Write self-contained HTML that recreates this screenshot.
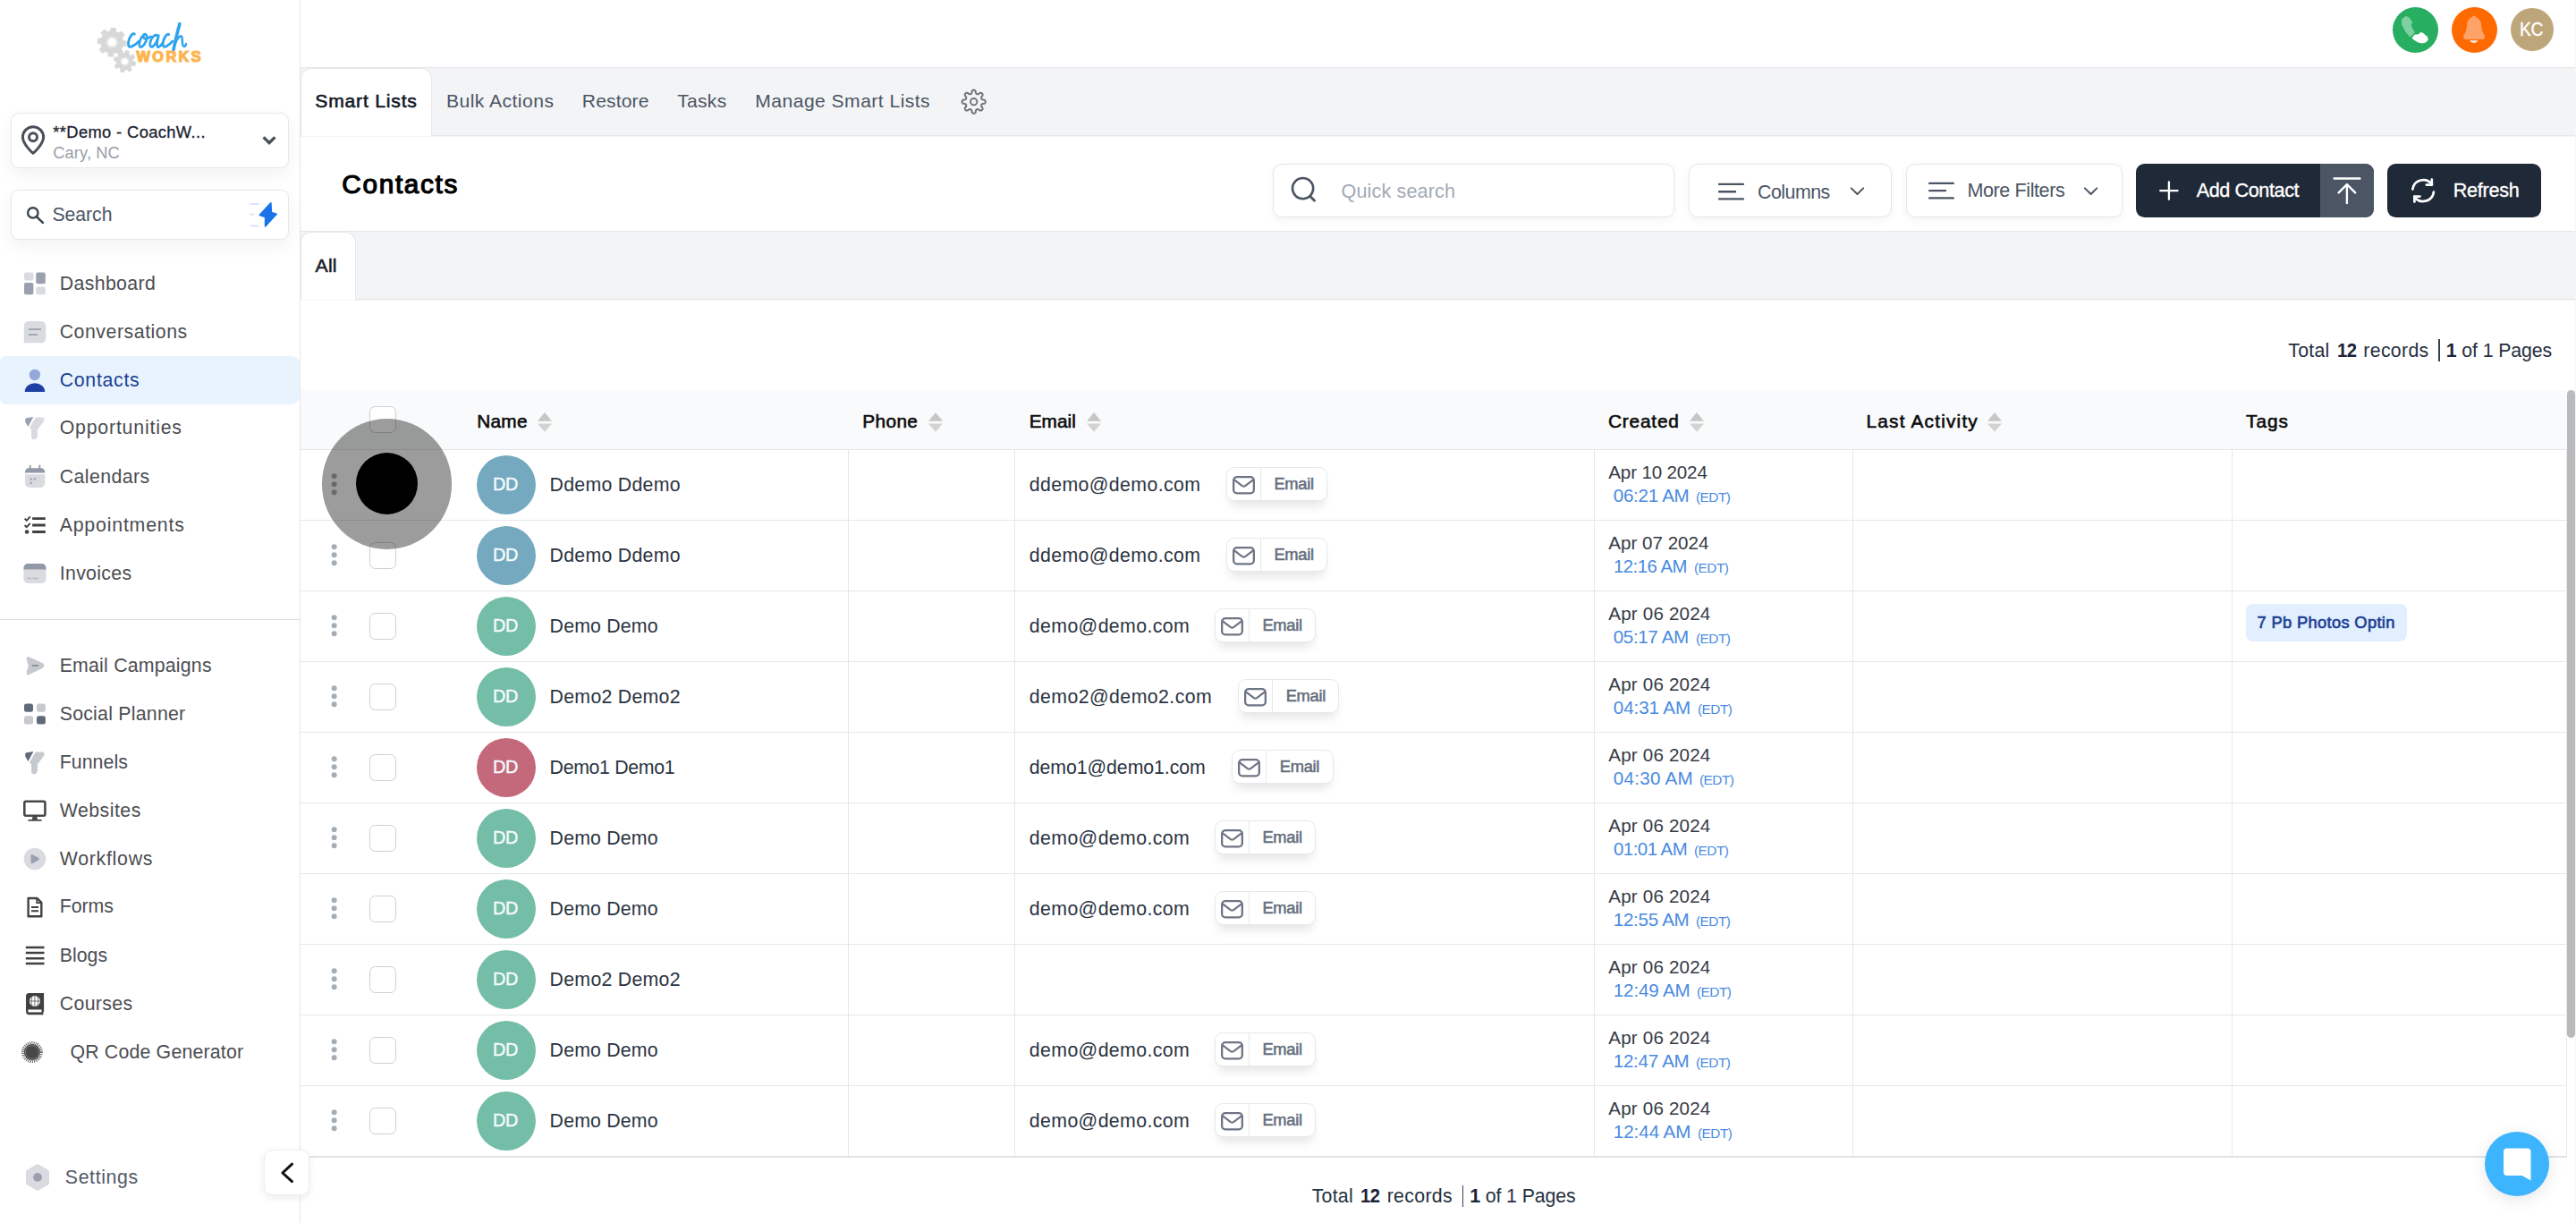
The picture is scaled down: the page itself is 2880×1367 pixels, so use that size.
<!DOCTYPE html>
<html><head><meta charset="utf-8"><title>Contacts</title>
<style>
html,body{margin:0;padding:0;}
body{width:2880px;height:1367px;overflow:hidden;background:#fff;position:relative;font-family:"Liberation Sans",sans-serif;}
.b{position:absolute;box-sizing:border-box;display:block;}
.t{position:absolute;white-space:nowrap;font-family:"Liberation Sans",sans-serif;}
</style></head><body>
<div class="b " style="left:335px;top:0px;width:1px;height:1367px;background:#e5e6ea;"></div>
<div class="b " style="left:336px;top:75px;width:2544px;height:1px;background:#e5e7eb;"></div>
<div class="b " style="left:336px;top:76px;width:2544px;height:75px;background:#f3f4f6;"></div>
<div class="b " style="left:336px;top:151px;width:2544px;height:1px;background:#e5e7eb;"></div>
<div class="b " style="left:336px;top:152px;width:2544px;height:1px;background:#f3f4f6;"></div>
<div class="b " style="left:336px;top:76px;width:147px;height:76px;background:#fff;border-radius:12.5px 12.5px 0 0;border:1px solid #e4e6ea;border-bottom:none;"></div>
<div class="b " style="left:336px;top:258px;width:2544px;height:1px;background:#e5e7eb;"></div>
<div class="b " style="left:336px;top:259px;width:2544px;height:75px;background:#f3f4f6;"></div>
<div class="b " style="left:336px;top:334px;width:2544px;height:1px;background:#e5e7eb;"></div>
<div class="b " style="left:336px;top:335px;width:2544px;height:1px;background:#f3f4f6;"></div>
<div class="b " style="left:336px;top:259px;width:62px;height:76px;background:#fff;border-radius:12px 12px 0 0;border:1px solid #e4e6ea;border-bottom:none;"></div>
<div class="b " style="left:336px;top:436px;width:2533px;height:66px;background:#f9fafb;"></div>
<div class="b " style="left:336px;top:502px;width:2534px;height:1px;background:#e5e7eb;"></div>
<div class="b " style="left:2869px;top:503px;width:1px;height:791px;background:#e7e8ea;"></div>
<div class="b " style="left:2879px;top:0px;width:1px;height:1367px;background:#f6f6f6;"></div>
<div class="b " style="left:2675px;top:8px;width:51px;height:51px;background:#27ae60;border-radius:50%;"></div>
<svg class="b" style="left:2675px;top:8px;overflow:visible;" width="51" height="51" viewBox="2675 8 51 51"><path d="M2689.9 18.6 L2693.4 20.4 L2696.4 25.2 L2694.8 28.2 L2696.9 32.8 L2699 36.2 L2694.5 40.5 L2689.2 34.1 L2685.7 26.7 L2686.1 21.4Z" fill="#7fd0a1" stroke="#7fd0a1" stroke-width="1.4" stroke-linejoin="round"/><path d="M2697.2 42.4 L2700 39.2 L2703.3 39.2 L2707.1 36.5 L2710.2 38.6 L2713.5 41.4 L2714.2 44.4 L2712.1 46.6 L2708.3 47.9 L2703 46.6 L2699.2 44.2Z" fill="#fff" stroke="#fff" stroke-width="1.2" stroke-linejoin="round"/></svg>
<div class="b " style="left:2741.4px;top:8px;width:51px;height:51px;background:#ff6a00;border-radius:50%;"></div>
<svg class="b" style="left:2741px;top:8px;overflow:visible;" width="51" height="51" viewBox="2741 8 51 51"><circle cx="2765.9" cy="19.4" r="2" fill="#ffa269"/><path d="M2765.9 18.9 C2761 19.2 2758.6 22.6 2758.2 27.4 C2757.8 32.6 2756.8 35.6 2755 38.4 C2753.6 40.8 2754.2 43.9 2756.6 43.9 H2775.6 C2778 43.9 2778.6 40.8 2777.2 38.4 C2775.4 35.6 2774.4 32.6 2774 27.4 C2773.6 22.6 2770.8 19.2 2765.9 18.9Z" fill="#ffa269"/><path d="M2761.4 45.2 H2770.2 C2769.4 48.8 2762.2 48.8 2761.4 45.2Z" fill="#fff0e4"/></svg>
<div class="b " style="left:2807px;top:9px;width:48px;height:48px;background:#bda77a;border-radius:50%;"></div>
<div class="t" style="left:2816.90px;top:18px;font-size:22.3px;line-height:29px;color:#fff;letter-spacing:-0.500px;transform:scaleX(0.8657);transform-origin:0 0;-webkit-text-stroke:0.4px #fff;">KC</div>
<div class="t" style="left:352.30px;top:99px;font-size:21.1px;line-height:28px;color:#111827;letter-spacing:0.810px;-webkit-text-stroke:0.6px #111827;">Smart Lists</div>
<div class="t" style="left:498.90px;top:99px;font-size:21.1px;line-height:28px;color:#4b5563;letter-spacing:0.469px;">Bulk Actions</div>
<div class="t" style="left:650.80px;top:99px;font-size:21.1px;line-height:28px;color:#4b5563;letter-spacing:0.133px;">Restore</div>
<div class="t" style="left:757.30px;top:99px;font-size:21.1px;line-height:28px;color:#4b5563;letter-spacing:0.247px;">Tasks</div>
<div class="t" style="left:844.30px;top:99px;font-size:21.1px;line-height:28px;color:#4b5563;letter-spacing:0.457px;">Manage Smart Lists</div>
<svg class="b" style="left:1074px;top:99px;overflow:visible;" width="30" height="30" viewBox="1074 99 30 30"><path d="M1088.70 100.60 L1089.04 100.63 L1089.38 100.71 L1089.71 100.85 L1090.03 101.06 L1090.33 101.32 L1090.60 101.68 L1090.83 102.18 L1090.90 103.34 L1091.06 103.85 L1091.24 104.22 L1091.42 104.51 L1091.61 104.75 L1091.80 104.94 L1092.01 105.09 L1092.22 105.20 L1092.45 105.27 L1092.70 105.31 L1092.97 105.31 L1093.27 105.28 L1093.61 105.20 L1093.99 105.06 L1094.47 104.82 L1095.33 104.05 L1095.85 103.85 L1096.30 103.80 L1096.70 103.82 L1097.07 103.90 L1097.40 104.04 L1097.70 104.21 L1097.96 104.44 L1098.19 104.70 L1098.36 105.00 L1098.50 105.33 L1098.58 105.70 L1098.60 106.10 L1098.55 106.55 L1098.35 107.07 L1097.58 107.93 L1097.34 108.41 L1097.20 108.79 L1097.12 109.13 L1097.09 109.43 L1097.09 109.70 L1097.13 109.95 L1097.20 110.18 L1097.31 110.39 L1097.46 110.60 L1097.65 110.79 L1097.89 110.98 L1098.18 111.16 L1098.55 111.34 L1099.06 111.50 L1100.22 111.57 L1100.72 111.80 L1101.08 112.07 L1101.34 112.37 L1101.55 112.69 L1101.69 113.02 L1101.77 113.36 L1101.80 113.70 L1101.77 114.04 L1101.69 114.38 L1101.55 114.71 L1101.34 115.03 L1101.08 115.33 L1100.72 115.60 L1100.22 115.83 L1099.06 115.90 L1098.55 116.06 L1098.18 116.24 L1097.89 116.42 L1097.65 116.61 L1097.46 116.80 L1097.31 117.01 L1097.20 117.22 L1097.13 117.45 L1097.09 117.70 L1097.09 117.97 L1097.12 118.27 L1097.20 118.61 L1097.34 118.99 L1097.58 119.47 L1098.35 120.33 L1098.55 120.85 L1098.60 121.30 L1098.58 121.70 L1098.50 122.07 L1098.36 122.40 L1098.19 122.70 L1097.96 122.96 L1097.70 123.19 L1097.40 123.36 L1097.07 123.50 L1096.70 123.58 L1096.30 123.60 L1095.85 123.55 L1095.33 123.35 L1094.47 122.58 L1093.99 122.34 L1093.61 122.20 L1093.27 122.12 L1092.97 122.09 L1092.70 122.09 L1092.45 122.13 L1092.22 122.20 L1092.01 122.31 L1091.80 122.46 L1091.61 122.65 L1091.42 122.89 L1091.24 123.18 L1091.06 123.55 L1090.90 124.06 L1090.83 125.22 L1090.60 125.72 L1090.33 126.08 L1090.03 126.34 L1089.71 126.55 L1089.38 126.69 L1089.04 126.77 L1088.70 126.80 L1088.36 126.77 L1088.02 126.69 L1087.69 126.55 L1087.37 126.34 L1087.07 126.08 L1086.80 125.72 L1086.57 125.22 L1086.50 124.06 L1086.34 123.55 L1086.16 123.18 L1085.98 122.89 L1085.79 122.65 L1085.60 122.46 L1085.39 122.31 L1085.18 122.20 L1084.95 122.13 L1084.70 122.09 L1084.43 122.09 L1084.13 122.12 L1083.79 122.20 L1083.41 122.34 L1082.93 122.58 L1082.07 123.35 L1081.55 123.55 L1081.10 123.60 L1080.70 123.58 L1080.33 123.50 L1080.00 123.36 L1079.70 123.19 L1079.44 122.96 L1079.21 122.70 L1079.04 122.40 L1078.90 122.07 L1078.82 121.70 L1078.80 121.30 L1078.85 120.85 L1079.05 120.33 L1079.82 119.47 L1080.06 118.99 L1080.20 118.61 L1080.28 118.27 L1080.31 117.97 L1080.31 117.70 L1080.27 117.45 L1080.20 117.22 L1080.09 117.01 L1079.94 116.80 L1079.75 116.61 L1079.51 116.42 L1079.22 116.24 L1078.85 116.06 L1078.34 115.90 L1077.18 115.83 L1076.68 115.60 L1076.32 115.33 L1076.06 115.03 L1075.85 114.71 L1075.71 114.38 L1075.63 114.04 L1075.60 113.70 L1075.63 113.36 L1075.71 113.02 L1075.85 112.69 L1076.06 112.37 L1076.32 112.07 L1076.68 111.80 L1077.18 111.57 L1078.34 111.50 L1078.85 111.34 L1079.22 111.16 L1079.51 110.98 L1079.75 110.79 L1079.94 110.60 L1080.09 110.39 L1080.20 110.18 L1080.27 109.95 L1080.31 109.70 L1080.31 109.43 L1080.28 109.13 L1080.20 108.79 L1080.06 108.41 L1079.82 107.93 L1079.05 107.07 L1078.85 106.55 L1078.80 106.10 L1078.82 105.70 L1078.90 105.33 L1079.04 105.00 L1079.21 104.70 L1079.44 104.44 L1079.70 104.21 L1080.00 104.04 L1080.33 103.90 L1080.70 103.82 L1081.10 103.80 L1081.55 103.85 L1082.07 104.05 L1082.93 104.82 L1083.41 105.06 L1083.79 105.20 L1084.13 105.28 L1084.43 105.31 L1084.70 105.31 L1084.95 105.27 L1085.18 105.20 L1085.39 105.09 L1085.60 104.94 L1085.79 104.75 L1085.98 104.51 L1086.16 104.22 L1086.34 103.85 L1086.50 103.34 L1086.57 102.18 L1086.80 101.68 L1087.07 101.32 L1087.37 101.06 L1087.69 100.85 L1088.02 100.71 L1088.36 100.63Z" fill="none" stroke="#727477" stroke-width="2" stroke-linejoin="round"/><circle cx="1088.7" cy="113.7" r="3.7" fill="none" stroke="#727477" stroke-width="2"/></svg>
<div class="t" style="left:382.30px;top:188px;font-size:29.7px;line-height:36px;color:#000;letter-spacing:1.708px;-webkit-text-stroke:1.2px #000;">Contacts</div>
<div class="t" style="left:352.60px;top:283px;font-size:21.1px;line-height:28px;color:#1a202c;letter-spacing:0.213px;-webkit-text-stroke:0.6px #1a202c;">All</div>
<div class="b " style="left:1423.3px;top:183px;width:449.2px;height:59.6px;background:#fff;border:1px solid #e5e7eb;border-radius:10px;box-shadow:0 3px 10px rgba(0,0,0,0.05);"></div>
<svg class="b" style="left:1440px;top:196px;overflow:visible;" width="34" height="34" viewBox="1440 196 34 34"><circle cx="1456.6" cy="210.6" r="11.6" fill="none" stroke="#4b5563" stroke-width="2.6"/><path d="M1464.6 219.2 L1469.6 224.2" stroke="#4b5563" stroke-width="2.8" stroke-linecap="round"/></svg>
<div class="t" style="left:1499.50px;top:200px;font-size:21.6px;line-height:28px;color:#a0aab5;letter-spacing:0.133px;">Quick search</div>
<div class="b " style="left:1888.2px;top:183px;width:227.2px;height:59.6px;background:#fff;border:1px solid #e5e7eb;border-radius:10px;box-shadow:0 3px 10px rgba(0,0,0,0.05);"></div>
<svg class="b" style="left:1920px;top:200px;overflow:visible;" width="32" height="28" viewBox="1920 200 32 28"><path d="M1922.1 205.9 H1948.9 M1922.1 214.3 H1940 M1922.1 222.4 H1948.9" stroke="#4b5563" stroke-width="2.4" stroke-linecap="round"/></svg>
<div class="t" style="left:1964.50px;top:201px;font-size:21.6px;line-height:28px;color:#4b5563;letter-spacing:-0.500px;transform:scaleX(0.9889);transform-origin:0 0;">Columns</div>
<svg class="b" style="left:2066px;top:206px;overflow:visible;" width="22" height="16" viewBox="2066 206 22 16"><path d="M2069.8 210.4 L2076.5 217 L2083.2 210.4" fill="none" stroke="#4b5563" stroke-width="2" stroke-linecap="round" stroke-linejoin="round"/></svg>
<div class="b " style="left:2131.4px;top:183px;width:241.2px;height:59.6px;background:#fff;border:1px solid #e5e7eb;border-radius:10px;box-shadow:0 3px 10px rgba(0,0,0,0.05);"></div>
<svg class="b" style="left:2155px;top:199px;overflow:visible;" width="32" height="28" viewBox="2155 199 32 28"><path d="M2157.2 204.9 H2183.8 M2157.2 213.1 H2175 M2157.2 221.4 H2183.8" stroke="#4b5563" stroke-width="2.4" stroke-linecap="round"/></svg>
<div class="t" style="left:2199.40px;top:199px;font-size:21.6px;line-height:28px;color:#4b5563;letter-spacing:-0.418px;">More Filters</div>
<svg class="b" style="left:2327px;top:206px;overflow:visible;" width="22" height="16" viewBox="2327 206 22 16"><path d="M2330.9 210.4 L2337.6 217 L2344.3 210.4" fill="none" stroke="#4b5563" stroke-width="2" stroke-linecap="round" stroke-linejoin="round"/></svg>
<div class="b " style="left:2388px;top:183.2px;width:266px;height:59.6px;background:#1f2937;border-radius:9.5px;"></div>
<div class="b " style="left:2594.2px;top:183.2px;width:59.8px;height:59.6px;background:#4b5563;border-radius:0 9.5px 9.5px 0;"></div>
<svg class="b" style="left:2412px;top:200px;overflow:visible;" width="26" height="26" viewBox="2412 200 26 26"><path d="M2424.9 203.4 V222.8 M2415.2 213.1 H2434.6" stroke="#fff" stroke-width="2.3" stroke-linecap="round"/></svg>
<div class="t" style="left:2455.68px;top:199px;font-size:21.6px;line-height:28px;color:#fff;letter-spacing:-0.390px;-webkit-text-stroke:0.35px #fff;">Add Contact</div>
<svg class="b" style="left:2606px;top:196px;overflow:visible;" width="36" height="34" viewBox="2606 196 36 34"><path d="M2609.6 199.5 H2638.4 M2623.9 227 V206.5 M2614.6 215.4 L2623.9 206.1 L2633.2 215.4" fill="none" stroke="#fff" stroke-width="2.4" stroke-linecap="round" stroke-linejoin="round"/></svg>
<div class="b " style="left:2668.9px;top:183.2px;width:172.2px;height:59.6px;background:#1f2937;border-radius:9.5px;"></div>
<svg class="b" style="left:2694px;top:198px;overflow:visible;" width="30" height="30" viewBox="2694 198 30 30"><g transform="translate(5418.2,0) scale(-1,1)"><path d="M2720.9 211.5 A12 12 0 0 0 2699.2 206.3 M2697.3 214.7 A12 12 0 0 0 2719 219.9" fill="none" stroke="#fff" stroke-width="2.7" stroke-linecap="round"/><path d="M2699.4 200.6 V206.6 H2705.4 M2718.8 225.6 V219.6 H2712.8" fill="none" stroke="#fff" stroke-width="2.7" stroke-linecap="round" stroke-linejoin="round"/></g></svg>
<div class="t" style="left:2742.68px;top:199px;font-size:21.6px;line-height:28px;color:#fff;letter-spacing:-0.267px;-webkit-text-stroke:0.35px #fff;">Refresh</div>
<div class="t" style="left:2558.30px;top:378px;font-size:21.3px;line-height:28px;color:#263040;letter-spacing:0.251px;">Total</div>
<div class="t" style="left:2612.50px;top:378px;font-size:21.3px;line-height:28px;color:#1a2233;font-weight:700;letter-spacing:-0.500px;transform:scaleX(0.9484);transform-origin:0 0;">12</div>
<div class="t" style="left:2642.30px;top:378px;font-size:21.3px;line-height:28px;color:#263040;letter-spacing:0.327px;">records</div>
<div class="b " style="left:2726.1px;top:379.4px;width:1.6px;height:24.3px;background:#374151;"></div>
<div class="t" style="left:2734.80px;top:378px;font-size:21.3px;line-height:28px;color:#1a2233;font-weight:700;">1</div>
<div class="t" style="left:2752.30px;top:378px;font-size:21.3px;line-height:28px;color:#263040;letter-spacing:-0.096px;">of 1 Pages</div>
<div class="t" style="left:1466.70px;top:1323px;font-size:21.3px;line-height:28px;color:#263040;letter-spacing:0.251px;">Total</div>
<div class="t" style="left:1520.90px;top:1323px;font-size:21.3px;line-height:28px;color:#1a2233;font-weight:700;letter-spacing:-0.500px;transform:scaleX(0.9484);transform-origin:0 0;">12</div>
<div class="t" style="left:1550.70px;top:1323px;font-size:21.3px;line-height:28px;color:#263040;letter-spacing:0.327px;">records</div>
<div class="b " style="left:1634.5px;top:1325.2px;width:1.6px;height:24.3px;background:#374151;"></div>
<div class="t" style="left:1643.20px;top:1323px;font-size:21.3px;line-height:28px;color:#1a2233;font-weight:700;">1</div>
<div class="t" style="left:1660.70px;top:1323px;font-size:21.3px;line-height:28px;color:#263040;letter-spacing:-0.096px;">of 1 Pages</div>
<div class="t" style="left:533.20px;top:457px;font-size:20.8px;line-height:27px;color:#0b0b0c;letter-spacing:0.272px;-webkit-text-stroke:0.6px #0b0b0c;">Name</div>
<svg class="b" style="left:601.0999999999999px;top:460px;overflow:visible;" width="16.0" height="24" viewBox="601.0999999999999 460 16.0 24"><path d="M609.0999999999999 461 L617.0999999999999 470.8 H601.0999999999999Z" fill="#c6c6c6"/><path d="M609.0999999999999 482.8 L617.0999999999999 473.6 H601.0999999999999Z" fill="#d3d3d3"/></svg>
<div class="t" style="left:964.30px;top:457px;font-size:20.8px;line-height:27px;color:#0b0b0c;letter-spacing:0.359px;-webkit-text-stroke:0.6px #0b0b0c;">Phone</div>
<svg class="b" style="left:1037.5px;top:460px;overflow:visible;" width="16.0" height="24" viewBox="1037.5 460 16.0 24"><path d="M1045.5 461 L1053.5 470.8 H1037.5Z" fill="#c6c6c6"/><path d="M1045.5 482.8 L1053.5 473.6 H1037.5Z" fill="#d3d3d3"/></svg>
<div class="t" style="left:1150.70px;top:457px;font-size:20.8px;line-height:27px;color:#0b0b0c;letter-spacing:0.050px;-webkit-text-stroke:0.6px #0b0b0c;">Email</div>
<svg class="b" style="left:1214.5px;top:460px;overflow:visible;" width="16.0" height="24" viewBox="1214.5 460 16.0 24"><path d="M1222.5 461 L1230.5 470.8 H1214.5Z" fill="#c6c6c6"/><path d="M1222.5 482.8 L1230.5 473.6 H1214.5Z" fill="#d3d3d3"/></svg>
<div class="t" style="left:1797.90px;top:457px;font-size:20.8px;line-height:27px;color:#0b0b0c;letter-spacing:0.834px;-webkit-text-stroke:0.6px #0b0b0c;">Created</div>
<svg class="b" style="left:1888.4999999999998px;top:460px;overflow:visible;" width="16.0" height="24" viewBox="1888.4999999999998 460 16.0 24"><path d="M1896.4999999999998 461 L1904.4999999999998 470.8 H1888.4999999999998Z" fill="#c6c6c6"/><path d="M1896.4999999999998 482.8 L1904.4999999999998 473.6 H1888.4999999999998Z" fill="#d3d3d3"/></svg>
<div class="t" style="left:2086.60px;top:457px;font-size:20.8px;line-height:27px;color:#0b0b0c;letter-spacing:1.198px;-webkit-text-stroke:0.6px #0b0b0c;">Last Activity</div>
<svg class="b" style="left:2222.4000000000005px;top:460px;overflow:visible;" width="16.0" height="24" viewBox="2222.4000000000005 460 16.0 24"><path d="M2230.4000000000005 461 L2238.4000000000005 470.8 H2222.4000000000005Z" fill="#c6c6c6"/><path d="M2230.4000000000005 482.8 L2238.4000000000005 473.6 H2222.4000000000005Z" fill="#d3d3d3"/></svg>
<div class="t" style="left:2511.10px;top:457px;font-size:20.8px;line-height:27px;color:#0b0b0c;letter-spacing:0.987px;-webkit-text-stroke:0.6px #0b0b0c;">Tags</div>
<div class="b " style="left:413px;top:454.3px;width:30px;height:29.6px;background:#fff;border:1.2px solid #cecfd3;border-radius:6.5px;"></div>
<div class="b " style="left:336px;top:581px;width:2534px;height:1px;background:#e5e7eb;"></div>
<svg class="b" style="left:369px;top:528px;overflow:visible;" width="10" height="27" viewBox="369 528 10 27"><circle cx="373.6" cy="532.35" r="3" fill="#a5adb5"/><circle cx="373.6" cy="541.35" r="3" fill="#a5adb5"/><circle cx="373.6" cy="550.35" r="3" fill="#a5adb5"/></svg>
<div class="b " style="left:413px;top:526.8px;width:30px;height:30px;background:#fff;border:1.2px solid #cecfd3;border-radius:6.5px;"></div>
<div class="b " style="left:533px;top:508.8px;width:66px;height:66px;background:#74a9bf;border-radius:50%;"></div>
<div class="t" style="left:551.23px;top:527px;font-size:20.8px;line-height:27px;color:#f4fafc;letter-spacing:-0.500px;transform:scaleX(0.9558);transform-origin:0 0;-webkit-text-stroke:0.45px #f4fafc;">DD</div>
<div class="t" style="left:614.60px;top:528px;font-size:21.3px;line-height:28px;color:#2b3442;letter-spacing:0.276px;">Ddemo Ddemo</div>
<div class="t" style="left:1150.80px;top:528px;font-size:21.3px;line-height:28px;color:#2b3442;letter-spacing:0.383px;">ddemo@demo.com</div>
<div class="b " style="left:1371px;top:522px;width:113.2px;height:38.2px;background:#fff;border:1.3px solid #e6e8eb;border-radius:9px;box-shadow:0 9px 12px -4px rgba(0,0,0,0.11);"></div>
<div class="b " style="left:1409px;top:523px;width:1px;height:36px;background:#e5e7eb;"></div>
<svg class="b" style="left:1378px;top:531.6px;overflow:visible;" width="25" height="21.0" viewBox="1378 531.6 25 21.0"><rect x="1379.15" y="532.75" width="22.7" height="18.2" rx="3.8" fill="none" stroke="#6d7584" stroke-width="2.3"/><path d="M1380 536.0 L1388.9 542.7 Q1390.5 543.8000000000001 1392.1 542.7 L1401 536.0" fill="none" stroke="#6d7584" stroke-width="2.2" stroke-linejoin="round" stroke-linecap="round"/></svg>
<div class="t" style="left:1424.38px;top:528px;font-size:18.3px;line-height:25px;color:#656e7d;letter-spacing:-0.275px;-webkit-text-stroke:0.55px #656e7d;">Email</div>
<div class="t" style="left:1798.30px;top:514px;font-size:20.6px;line-height:27px;color:#363b45;letter-spacing:-0.167px;">Apr 10 2024</div>
<div class="t" style="left:1803.80px;top:540px;font-size:20.6px;line-height:27px;color:#4a8be0;letter-spacing:-0.291px;">06:21 AM</div>
<div class="t" style="left:1896.10px;top:545px;font-size:15.4px;line-height:22px;color:#4a8be0;letter-spacing:-0.500px;transform:scaleX(0.9989);transform-origin:0 0;">(EDT)</div>
<div class="b " style="left:336px;top:660px;width:2534px;height:1px;background:#e5e7eb;"></div>
<svg class="b" style="left:369px;top:607px;overflow:visible;" width="10" height="27" viewBox="369 607 10 27"><circle cx="373.6" cy="611.35" r="3" fill="#a5adb5"/><circle cx="373.6" cy="620.35" r="3" fill="#a5adb5"/><circle cx="373.6" cy="629.35" r="3" fill="#a5adb5"/></svg>
<div class="b " style="left:413px;top:605.8px;width:30px;height:30px;background:#fff;border:1.2px solid #cecfd3;border-radius:6.5px;"></div>
<div class="b " style="left:533px;top:587.8px;width:66px;height:66px;background:#74a9bf;border-radius:50%;"></div>
<div class="t" style="left:551.23px;top:606px;font-size:20.8px;line-height:27px;color:#f4fafc;letter-spacing:-0.500px;transform:scaleX(0.9558);transform-origin:0 0;-webkit-text-stroke:0.45px #f4fafc;">DD</div>
<div class="t" style="left:614.60px;top:607px;font-size:21.3px;line-height:28px;color:#2b3442;letter-spacing:0.276px;">Ddemo Ddemo</div>
<div class="t" style="left:1150.80px;top:607px;font-size:21.3px;line-height:28px;color:#2b3442;letter-spacing:0.383px;">ddemo@demo.com</div>
<div class="b " style="left:1371px;top:601px;width:113.2px;height:38.2px;background:#fff;border:1.3px solid #e6e8eb;border-radius:9px;box-shadow:0 9px 12px -4px rgba(0,0,0,0.11);"></div>
<div class="b " style="left:1409px;top:602px;width:1px;height:36px;background:#e5e7eb;"></div>
<svg class="b" style="left:1378px;top:610.6px;overflow:visible;" width="25" height="21.0" viewBox="1378 610.6 25 21.0"><rect x="1379.15" y="611.75" width="22.7" height="18.2" rx="3.8" fill="none" stroke="#6d7584" stroke-width="2.3"/><path d="M1380 615.0 L1388.9 621.7 Q1390.5 622.8000000000001 1392.1 621.7 L1401 615.0" fill="none" stroke="#6d7584" stroke-width="2.2" stroke-linejoin="round" stroke-linecap="round"/></svg>
<div class="t" style="left:1424.38px;top:607px;font-size:18.3px;line-height:25px;color:#656e7d;letter-spacing:-0.275px;-webkit-text-stroke:0.55px #656e7d;">Email</div>
<div class="t" style="left:1798.30px;top:593px;font-size:20.6px;line-height:27px;color:#363b45;letter-spacing:-0.007px;">Apr 07 2024</div>
<div class="t" style="left:1803.80px;top:619px;font-size:20.6px;line-height:27px;color:#4a8be0;letter-spacing:-0.500px;transform:scaleX(0.9864);transform-origin:0 0;">12:16 AM</div>
<div class="t" style="left:1893.50px;top:624px;font-size:15.4px;line-height:22px;color:#4a8be0;letter-spacing:-0.500px;transform:scaleX(0.9989);transform-origin:0 0;">(EDT)</div>
<div class="b " style="left:336px;top:739px;width:2534px;height:1px;background:#e5e7eb;"></div>
<svg class="b" style="left:369px;top:686px;overflow:visible;" width="10" height="27" viewBox="369 686 10 27"><circle cx="373.6" cy="690.35" r="3" fill="#a5adb5"/><circle cx="373.6" cy="699.35" r="3" fill="#a5adb5"/><circle cx="373.6" cy="708.35" r="3" fill="#a5adb5"/></svg>
<div class="b " style="left:413px;top:684.8px;width:30px;height:30px;background:#fff;border:1.2px solid #cecfd3;border-radius:6.5px;"></div>
<div class="b " style="left:533px;top:666.8px;width:66px;height:66px;background:#74bda7;border-radius:50%;"></div>
<div class="t" style="left:551.23px;top:685px;font-size:20.8px;line-height:27px;color:#f4fafc;letter-spacing:-0.500px;transform:scaleX(0.9558);transform-origin:0 0;-webkit-text-stroke:0.45px #f4fafc;">DD</div>
<div class="t" style="left:614.60px;top:686px;font-size:21.3px;line-height:28px;color:#2b3442;letter-spacing:0.182px;">Demo Demo</div>
<div class="t" style="left:1150.80px;top:686px;font-size:21.3px;line-height:28px;color:#2b3442;letter-spacing:0.388px;">demo@demo.com</div>
<div class="b " style="left:1358px;top:680px;width:113.2px;height:38.2px;background:#fff;border:1.3px solid #e6e8eb;border-radius:9px;box-shadow:0 9px 12px -4px rgba(0,0,0,0.11);"></div>
<div class="b " style="left:1396px;top:681px;width:1px;height:36px;background:#e5e7eb;"></div>
<svg class="b" style="left:1365px;top:689.6px;overflow:visible;" width="25" height="21.0" viewBox="1365 689.6 25 21.0"><rect x="1366.15" y="690.75" width="22.7" height="18.2" rx="3.8" fill="none" stroke="#6d7584" stroke-width="2.3"/><path d="M1367 694.0 L1375.9 700.7 Q1377.5 701.8000000000001 1379.1 700.7 L1388 694.0" fill="none" stroke="#6d7584" stroke-width="2.2" stroke-linejoin="round" stroke-linecap="round"/></svg>
<div class="t" style="left:1411.38px;top:686px;font-size:18.3px;line-height:25px;color:#656e7d;letter-spacing:-0.275px;-webkit-text-stroke:0.55px #656e7d;">Email</div>
<div class="t" style="left:1798.30px;top:672px;font-size:20.6px;line-height:27px;color:#363b45;letter-spacing:0.173px;">Apr 06 2024</div>
<div class="t" style="left:1803.80px;top:698px;font-size:20.6px;line-height:27px;color:#4a8be0;letter-spacing:-0.376px;">05:17 AM</div>
<div class="t" style="left:1895.50px;top:703px;font-size:15.4px;line-height:22px;color:#4a8be0;letter-spacing:-0.500px;transform:scaleX(0.9989);transform-origin:0 0;">(EDT)</div>
<div class="b " style="left:336px;top:818px;width:2534px;height:1px;background:#e5e7eb;"></div>
<svg class="b" style="left:369px;top:765px;overflow:visible;" width="10" height="27" viewBox="369 765 10 27"><circle cx="373.6" cy="769.35" r="3" fill="#a5adb5"/><circle cx="373.6" cy="778.35" r="3" fill="#a5adb5"/><circle cx="373.6" cy="787.35" r="3" fill="#a5adb5"/></svg>
<div class="b " style="left:413px;top:763.8px;width:30px;height:30px;background:#fff;border:1.2px solid #cecfd3;border-radius:6.5px;"></div>
<div class="b " style="left:533px;top:745.8px;width:66px;height:66px;background:#74bda7;border-radius:50%;"></div>
<div class="t" style="left:551.23px;top:764px;font-size:20.8px;line-height:27px;color:#f4fafc;letter-spacing:-0.500px;transform:scaleX(0.9558);transform-origin:0 0;-webkit-text-stroke:0.45px #f4fafc;">DD</div>
<div class="t" style="left:614.60px;top:765px;font-size:21.3px;line-height:28px;color:#2b3442;letter-spacing:0.276px;">Demo2 Demo2</div>
<div class="t" style="left:1150.80px;top:765px;font-size:21.3px;line-height:28px;color:#2b3442;letter-spacing:0.426px;">demo2@demo2.com</div>
<div class="b " style="left:1384.3px;top:759px;width:113.2px;height:38.2px;background:#fff;border:1.3px solid #e6e8eb;border-radius:9px;box-shadow:0 9px 12px -4px rgba(0,0,0,0.11);"></div>
<div class="b " style="left:1422px;top:760px;width:1px;height:36px;background:#e5e7eb;"></div>
<svg class="b" style="left:1391.3px;top:768.6px;overflow:visible;" width="25.0" height="21.0" viewBox="1391.3 768.6 25.0 21.0"><rect x="1392.45" y="769.75" width="22.7" height="18.2" rx="3.8" fill="none" stroke="#6d7584" stroke-width="2.3"/><path d="M1393.3 773.0 L1402.2 779.7 Q1403.8 780.8000000000001 1405.3999999999999 779.7 L1414.3 773.0" fill="none" stroke="#6d7584" stroke-width="2.2" stroke-linejoin="round" stroke-linecap="round"/></svg>
<div class="t" style="left:1437.67px;top:765px;font-size:18.3px;line-height:25px;color:#656e7d;letter-spacing:-0.275px;-webkit-text-stroke:0.55px #656e7d;">Email</div>
<div class="t" style="left:1798.30px;top:751px;font-size:20.6px;line-height:27px;color:#363b45;letter-spacing:0.173px;">Apr 06 2024</div>
<div class="t" style="left:1803.80px;top:777px;font-size:20.6px;line-height:27px;color:#4a8be0;letter-spacing:-0.091px;">04:31 AM</div>
<div class="t" style="left:1897.50px;top:782px;font-size:15.4px;line-height:22px;color:#4a8be0;letter-spacing:-0.500px;transform:scaleX(0.9989);transform-origin:0 0;">(EDT)</div>
<div class="b " style="left:336px;top:897px;width:2534px;height:1px;background:#e5e7eb;"></div>
<svg class="b" style="left:369px;top:844px;overflow:visible;" width="10" height="27" viewBox="369 844 10 27"><circle cx="373.6" cy="848.35" r="3" fill="#a5adb5"/><circle cx="373.6" cy="857.35" r="3" fill="#a5adb5"/><circle cx="373.6" cy="866.35" r="3" fill="#a5adb5"/></svg>
<div class="b " style="left:413px;top:842.8px;width:30px;height:30px;background:#fff;border:1.2px solid #cecfd3;border-radius:6.5px;"></div>
<div class="b " style="left:533px;top:824.8px;width:66px;height:66px;background:#c4697c;border-radius:50%;"></div>
<div class="t" style="left:551.23px;top:843px;font-size:20.8px;line-height:27px;color:#f4fafc;letter-spacing:-0.500px;transform:scaleX(0.9558);transform-origin:0 0;-webkit-text-stroke:0.45px #f4fafc;">DD</div>
<div class="t" style="left:614.60px;top:844px;font-size:21.3px;line-height:28px;color:#2b3442;letter-spacing:-0.324px;">Demo1 Demo1</div>
<div class="t" style="left:1150.80px;top:844px;font-size:21.3px;line-height:28px;color:#2b3442;letter-spacing:-0.074px;">demo1@demo1.com</div>
<div class="b " style="left:1377.4px;top:838px;width:113.2px;height:38.2px;background:#fff;border:1.3px solid #e6e8eb;border-radius:9px;box-shadow:0 9px 12px -4px rgba(0,0,0,0.11);"></div>
<div class="b " style="left:1415px;top:839px;width:1px;height:36px;background:#e5e7eb;"></div>
<svg class="b" style="left:1384.4px;top:847.6px;overflow:visible;" width="25.0" height="21.0" viewBox="1384.4 847.6 25.0 21.0"><rect x="1385.5500000000002" y="848.75" width="22.7" height="18.2" rx="3.8" fill="none" stroke="#6d7584" stroke-width="2.3"/><path d="M1386.4 852.0 L1395.3000000000002 858.7 Q1396.9 859.8000000000001 1398.5 858.7 L1407.4 852.0" fill="none" stroke="#6d7584" stroke-width="2.2" stroke-linejoin="round" stroke-linecap="round"/></svg>
<div class="t" style="left:1430.78px;top:844px;font-size:18.3px;line-height:25px;color:#656e7d;letter-spacing:-0.275px;-webkit-text-stroke:0.55px #656e7d;">Email</div>
<div class="t" style="left:1798.30px;top:830px;font-size:20.6px;line-height:27px;color:#363b45;letter-spacing:0.173px;">Apr 06 2024</div>
<div class="t" style="left:1803.80px;top:856px;font-size:20.6px;line-height:27px;color:#4a8be0;letter-spacing:0.281px;">04:30 AM</div>
<div class="t" style="left:1900.10px;top:861px;font-size:15.4px;line-height:22px;color:#4a8be0;letter-spacing:-0.500px;transform:scaleX(0.9989);transform-origin:0 0;">(EDT)</div>
<div class="b " style="left:336px;top:976px;width:2534px;height:1px;background:#e5e7eb;"></div>
<svg class="b" style="left:369px;top:923px;overflow:visible;" width="10" height="27" viewBox="369 923 10 27"><circle cx="373.6" cy="927.35" r="3" fill="#a5adb5"/><circle cx="373.6" cy="936.35" r="3" fill="#a5adb5"/><circle cx="373.6" cy="945.35" r="3" fill="#a5adb5"/></svg>
<div class="b " style="left:413px;top:921.8px;width:30px;height:30px;background:#fff;border:1.2px solid #cecfd3;border-radius:6.5px;"></div>
<div class="b " style="left:533px;top:903.8px;width:66px;height:66px;background:#74bda7;border-radius:50%;"></div>
<div class="t" style="left:551.23px;top:922px;font-size:20.8px;line-height:27px;color:#f4fafc;letter-spacing:-0.500px;transform:scaleX(0.9558);transform-origin:0 0;-webkit-text-stroke:0.45px #f4fafc;">DD</div>
<div class="t" style="left:614.60px;top:923px;font-size:21.3px;line-height:28px;color:#2b3442;letter-spacing:0.182px;">Demo Demo</div>
<div class="t" style="left:1150.80px;top:923px;font-size:21.3px;line-height:28px;color:#2b3442;letter-spacing:0.388px;">demo@demo.com</div>
<div class="b " style="left:1358px;top:917px;width:113.2px;height:38.2px;background:#fff;border:1.3px solid #e6e8eb;border-radius:9px;box-shadow:0 9px 12px -4px rgba(0,0,0,0.11);"></div>
<div class="b " style="left:1396px;top:918px;width:1px;height:36px;background:#e5e7eb;"></div>
<svg class="b" style="left:1365px;top:926.6px;overflow:visible;" width="25" height="21.0" viewBox="1365 926.6 25 21.0"><rect x="1366.15" y="927.75" width="22.7" height="18.2" rx="3.8" fill="none" stroke="#6d7584" stroke-width="2.3"/><path d="M1367 931.0 L1375.9 937.7 Q1377.5 938.8000000000001 1379.1 937.7 L1388 931.0" fill="none" stroke="#6d7584" stroke-width="2.2" stroke-linejoin="round" stroke-linecap="round"/></svg>
<div class="t" style="left:1411.38px;top:923px;font-size:18.3px;line-height:25px;color:#656e7d;letter-spacing:-0.275px;-webkit-text-stroke:0.55px #656e7d;">Email</div>
<div class="t" style="left:1798.30px;top:909px;font-size:20.6px;line-height:27px;color:#363b45;letter-spacing:0.173px;">Apr 06 2024</div>
<div class="t" style="left:1803.80px;top:935px;font-size:20.6px;line-height:27px;color:#4a8be0;letter-spacing:-0.500px;transform:scaleX(0.9900);transform-origin:0 0;">01:01 AM</div>
<div class="t" style="left:1893.80px;top:940px;font-size:15.4px;line-height:22px;color:#4a8be0;letter-spacing:-0.500px;transform:scaleX(0.9989);transform-origin:0 0;">(EDT)</div>
<div class="b " style="left:336px;top:1055px;width:2534px;height:1px;background:#e5e7eb;"></div>
<svg class="b" style="left:369px;top:1002px;overflow:visible;" width="10" height="27" viewBox="369 1002 10 27"><circle cx="373.6" cy="1006.35" r="3" fill="#a5adb5"/><circle cx="373.6" cy="1015.35" r="3" fill="#a5adb5"/><circle cx="373.6" cy="1024.35" r="3" fill="#a5adb5"/></svg>
<div class="b " style="left:413px;top:1000.8px;width:30px;height:30px;background:#fff;border:1.2px solid #cecfd3;border-radius:6.5px;"></div>
<div class="b " style="left:533px;top:982.8px;width:66px;height:66px;background:#74bda7;border-radius:50%;"></div>
<div class="t" style="left:551.23px;top:1001px;font-size:20.8px;line-height:27px;color:#f4fafc;letter-spacing:-0.500px;transform:scaleX(0.9558);transform-origin:0 0;-webkit-text-stroke:0.45px #f4fafc;">DD</div>
<div class="t" style="left:614.60px;top:1002px;font-size:21.3px;line-height:28px;color:#2b3442;letter-spacing:0.182px;">Demo Demo</div>
<div class="t" style="left:1150.80px;top:1002px;font-size:21.3px;line-height:28px;color:#2b3442;letter-spacing:0.388px;">demo@demo.com</div>
<div class="b " style="left:1358px;top:996px;width:113.2px;height:38.2px;background:#fff;border:1.3px solid #e6e8eb;border-radius:9px;box-shadow:0 9px 12px -4px rgba(0,0,0,0.11);"></div>
<div class="b " style="left:1396px;top:997px;width:1px;height:36px;background:#e5e7eb;"></div>
<svg class="b" style="left:1365px;top:1005.6px;overflow:visible;" width="25" height="20.999999999999886" viewBox="1365 1005.6 25 20.999999999999886"><rect x="1366.15" y="1006.75" width="22.7" height="18.2" rx="3.8" fill="none" stroke="#6d7584" stroke-width="2.3"/><path d="M1367 1010.0 L1375.9 1016.7 Q1377.5 1017.8000000000001 1379.1 1016.7 L1388 1010.0" fill="none" stroke="#6d7584" stroke-width="2.2" stroke-linejoin="round" stroke-linecap="round"/></svg>
<div class="t" style="left:1411.38px;top:1002px;font-size:18.3px;line-height:25px;color:#656e7d;letter-spacing:-0.275px;-webkit-text-stroke:0.55px #656e7d;">Email</div>
<div class="t" style="left:1798.30px;top:988px;font-size:20.6px;line-height:27px;color:#363b45;letter-spacing:0.173px;">Apr 06 2024</div>
<div class="t" style="left:1803.80px;top:1014px;font-size:20.6px;line-height:27px;color:#4a8be0;letter-spacing:-0.291px;">12:55 AM</div>
<div class="t" style="left:1896.10px;top:1019px;font-size:15.4px;line-height:22px;color:#4a8be0;letter-spacing:-0.500px;transform:scaleX(0.9989);transform-origin:0 0;">(EDT)</div>
<div class="b " style="left:336px;top:1134px;width:2534px;height:1px;background:#e5e7eb;"></div>
<svg class="b" style="left:369px;top:1081px;overflow:visible;" width="10" height="27" viewBox="369 1081 10 27"><circle cx="373.6" cy="1085.35" r="3" fill="#a5adb5"/><circle cx="373.6" cy="1094.35" r="3" fill="#a5adb5"/><circle cx="373.6" cy="1103.35" r="3" fill="#a5adb5"/></svg>
<div class="b " style="left:413px;top:1079.8px;width:30px;height:30px;background:#fff;border:1.2px solid #cecfd3;border-radius:6.5px;"></div>
<div class="b " style="left:533px;top:1061.8px;width:66px;height:66px;background:#74bda7;border-radius:50%;"></div>
<div class="t" style="left:551.23px;top:1080px;font-size:20.8px;line-height:27px;color:#f4fafc;letter-spacing:-0.500px;transform:scaleX(0.9558);transform-origin:0 0;-webkit-text-stroke:0.45px #f4fafc;">DD</div>
<div class="t" style="left:614.60px;top:1081px;font-size:21.3px;line-height:28px;color:#2b3442;letter-spacing:0.276px;">Demo2 Demo2</div>
<div class="t" style="left:1798.30px;top:1067px;font-size:20.6px;line-height:27px;color:#363b45;letter-spacing:0.173px;">Apr 06 2024</div>
<div class="t" style="left:1803.80px;top:1093px;font-size:20.6px;line-height:27px;color:#4a8be0;letter-spacing:-0.148px;">12:49 AM</div>
<div class="t" style="left:1897.10px;top:1098px;font-size:15.4px;line-height:22px;color:#4a8be0;letter-spacing:-0.500px;transform:scaleX(0.9989);transform-origin:0 0;">(EDT)</div>
<div class="b " style="left:336px;top:1213px;width:2534px;height:1px;background:#e5e7eb;"></div>
<svg class="b" style="left:369px;top:1160px;overflow:visible;" width="10" height="27" viewBox="369 1160 10 27"><circle cx="373.6" cy="1164.35" r="3" fill="#a5adb5"/><circle cx="373.6" cy="1173.35" r="3" fill="#a5adb5"/><circle cx="373.6" cy="1182.35" r="3" fill="#a5adb5"/></svg>
<div class="b " style="left:413px;top:1158.8px;width:30px;height:30px;background:#fff;border:1.2px solid #cecfd3;border-radius:6.5px;"></div>
<div class="b " style="left:533px;top:1140.8px;width:66px;height:66px;background:#74bda7;border-radius:50%;"></div>
<div class="t" style="left:551.23px;top:1159px;font-size:20.8px;line-height:27px;color:#f4fafc;letter-spacing:-0.500px;transform:scaleX(0.9558);transform-origin:0 0;-webkit-text-stroke:0.45px #f4fafc;">DD</div>
<div class="t" style="left:614.60px;top:1160px;font-size:21.3px;line-height:28px;color:#2b3442;letter-spacing:0.182px;">Demo Demo</div>
<div class="t" style="left:1150.80px;top:1160px;font-size:21.3px;line-height:28px;color:#2b3442;letter-spacing:0.388px;">demo@demo.com</div>
<div class="b " style="left:1358px;top:1154px;width:113.2px;height:38.2px;background:#fff;border:1.3px solid #e6e8eb;border-radius:9px;box-shadow:0 9px 12px -4px rgba(0,0,0,0.11);"></div>
<div class="b " style="left:1396px;top:1155px;width:1px;height:36px;background:#e5e7eb;"></div>
<svg class="b" style="left:1365px;top:1163.6px;overflow:visible;" width="25" height="21.0" viewBox="1365 1163.6 25 21.0"><rect x="1366.15" y="1164.75" width="22.7" height="18.2" rx="3.8" fill="none" stroke="#6d7584" stroke-width="2.3"/><path d="M1367 1168.0 L1375.9 1174.6999999999998 Q1377.5 1175.8 1379.1 1174.6999999999998 L1388 1168.0" fill="none" stroke="#6d7584" stroke-width="2.2" stroke-linejoin="round" stroke-linecap="round"/></svg>
<div class="t" style="left:1411.38px;top:1160px;font-size:18.3px;line-height:25px;color:#656e7d;letter-spacing:-0.275px;-webkit-text-stroke:0.55px #656e7d;">Email</div>
<div class="t" style="left:1798.30px;top:1146px;font-size:20.6px;line-height:27px;color:#363b45;letter-spacing:0.173px;">Apr 06 2024</div>
<div class="t" style="left:1803.80px;top:1172px;font-size:20.6px;line-height:27px;color:#4a8be0;letter-spacing:-0.291px;">12:47 AM</div>
<div class="t" style="left:1896.10px;top:1177px;font-size:15.4px;line-height:22px;color:#4a8be0;letter-spacing:-0.500px;transform:scaleX(0.9989);transform-origin:0 0;">(EDT)</div>
<div class="b " style="left:336px;top:1292px;width:2534px;height:1px;background:#e5e7eb;"></div>
<svg class="b" style="left:369px;top:1239px;overflow:visible;" width="10" height="27" viewBox="369 1239 10 27"><circle cx="373.6" cy="1243.35" r="3" fill="#a5adb5"/><circle cx="373.6" cy="1252.35" r="3" fill="#a5adb5"/><circle cx="373.6" cy="1261.35" r="3" fill="#a5adb5"/></svg>
<div class="b " style="left:413px;top:1237.8px;width:30px;height:30px;background:#fff;border:1.2px solid #cecfd3;border-radius:6.5px;"></div>
<div class="b " style="left:533px;top:1219.8px;width:66px;height:66px;background:#74bda7;border-radius:50%;"></div>
<div class="t" style="left:551.23px;top:1238px;font-size:20.8px;line-height:27px;color:#f4fafc;letter-spacing:-0.500px;transform:scaleX(0.9558);transform-origin:0 0;-webkit-text-stroke:0.45px #f4fafc;">DD</div>
<div class="t" style="left:614.60px;top:1239px;font-size:21.3px;line-height:28px;color:#2b3442;letter-spacing:0.182px;">Demo Demo</div>
<div class="t" style="left:1150.80px;top:1239px;font-size:21.3px;line-height:28px;color:#2b3442;letter-spacing:0.388px;">demo@demo.com</div>
<div class="b " style="left:1358px;top:1233px;width:113.2px;height:38.2px;background:#fff;border:1.3px solid #e6e8eb;border-radius:9px;box-shadow:0 9px 12px -4px rgba(0,0,0,0.11);"></div>
<div class="b " style="left:1396px;top:1234px;width:1px;height:36px;background:#e5e7eb;"></div>
<svg class="b" style="left:1365px;top:1242.6px;overflow:visible;" width="25" height="21.0" viewBox="1365 1242.6 25 21.0"><rect x="1366.15" y="1243.75" width="22.7" height="18.2" rx="3.8" fill="none" stroke="#6d7584" stroke-width="2.3"/><path d="M1367 1247.0 L1375.9 1253.6999999999998 Q1377.5 1254.8 1379.1 1253.6999999999998 L1388 1247.0" fill="none" stroke="#6d7584" stroke-width="2.2" stroke-linejoin="round" stroke-linecap="round"/></svg>
<div class="t" style="left:1411.38px;top:1239px;font-size:18.3px;line-height:25px;color:#656e7d;letter-spacing:-0.275px;-webkit-text-stroke:0.55px #656e7d;">Email</div>
<div class="t" style="left:1798.30px;top:1225px;font-size:20.6px;line-height:27px;color:#363b45;letter-spacing:0.173px;">Apr 06 2024</div>
<div class="t" style="left:1803.80px;top:1251px;font-size:20.6px;line-height:27px;color:#4a8be0;letter-spacing:-0.062px;">12:44 AM</div>
<div class="t" style="left:1897.70px;top:1256px;font-size:15.4px;line-height:22px;color:#4a8be0;letter-spacing:-0.500px;transform:scaleX(0.9989);transform-origin:0 0;">(EDT)</div>
<div class="b " style="left:948px;top:503px;width:1px;height:789px;background:#e5e7eb;"></div>
<div class="b " style="left:1134px;top:503px;width:1px;height:789px;background:#e5e7eb;"></div>
<div class="b " style="left:1782px;top:503px;width:1px;height:789px;background:#e5e7eb;"></div>
<div class="b " style="left:2071px;top:503px;width:1px;height:789px;background:#e5e7eb;"></div>
<div class="b " style="left:2495px;top:503px;width:1px;height:789px;background:#e5e7eb;"></div>
<div class="b " style="left:336px;top:1292px;width:2534px;height:2px;background:#e0e3e7;"></div>
<div class="b " style="left:2511px;top:674.8px;width:179.7px;height:42.3px;background:#e1effe;border-radius:8px;"></div>
<div class="t" style="left:2523.62px;top:683px;font-size:18.3px;line-height:25px;color:#1c3f94;letter-spacing:0.337px;-webkit-text-stroke:0.65px #1c3f94;">7 Pb Photos Optin</div>
<div class="b " style="left:2870px;top:436px;width:9px;height:724px;background:#b9babb;border-radius:4.5px;"></div>
<div class="b " style="left:12px;top:126px;width:311px;height:61.5px;background:#fff;border:1px solid #e5e7eb;border-radius:9px;box-shadow:0 7px 20px rgba(0,0,0,0.055);"></div>
<svg class="b" style="left:22px;top:139px;overflow:visible;" width="30" height="36" viewBox="22 139 30 36"><path d="M37 171.3 C37 171.3 25.4 161.5 25.4 153.3 A11.6 11.6 0 1 1 48.6 153.3 C48.6 161.5 37 171.3 37 171.3Z" fill="none" stroke="#4a505b" stroke-width="3" stroke-linejoin="round"/><circle cx="37" cy="153.3" r="4.5" fill="none" stroke="#4a505b" stroke-width="3"/></svg>
<div class="t" style="left:59.35px;top:135px;font-size:18.3px;line-height:25px;color:#1b2230;letter-spacing:0.386px;-webkit-text-stroke:0.3px #1b2230;">**Demo - CoachW...</div>
<div class="t" style="left:59.20px;top:158px;font-size:18.3px;line-height:25px;color:#989ea8;letter-spacing:0.116px;">Cary, NC</div>
<svg class="b" style="left:292px;top:150px;overflow:visible;" width="18" height="14" viewBox="292 150 18 14"><path d="M294.6 153.4 L301 159.6 L307.4 153.4" fill="none" stroke="#4a505b" stroke-width="3.4"/></svg>
<div class="b " style="left:12px;top:212px;width:311px;height:56px;background:#fff;border:1px solid #e5e7eb;border-radius:9px;box-shadow:0 7px 20px rgba(0,0,0,0.055);"></div>
<svg class="b" style="left:28px;top:229px;overflow:visible;" width="24" height="23" viewBox="28 229 24 23"><circle cx="36.8" cy="237.9" r="5.7" fill="none" stroke="#3c4554" stroke-width="2.4"/><path d="M41 242.3 L48 249" stroke="#3c4554" stroke-width="2.5" stroke-linecap="round"/></svg>
<div class="t" style="left:58.40px;top:226px;font-size:21.2px;line-height:28px;color:#4b5565;letter-spacing:-0.010px;">Search</div>
<svg class="b" style="left:278px;top:225px;overflow:visible;" width="33" height="30" viewBox="278 225 33 30"><path d="M279.5 227.9 H290 M279.5 239.7 H284.5 M279.5 252.3 H289" stroke="#d5e3f8" stroke-width="1.7"/><path d="M302.8 226.8 L290.4 240.4 L296.6 242.4 L296.6 253 L309.2 239.2 L303.4 237.4Z" fill="#1a73e8" stroke="#1a73e8" stroke-width="1.6" stroke-linejoin="round"/></svg>
<div class="b " style="left:0px;top:397.9px;width:335.3px;height:54.1px;background:#e8f3fe;border-radius:7px 9px 9px 7px;"></div>
<div class="t" style="left:66.70px;top:303px;font-size:21.3px;line-height:28px;color:#4b4d52;letter-spacing:0.374px;">Dashboard</div>
<div class="t" style="left:66.70px;top:357px;font-size:21.3px;line-height:28px;color:#4b4d52;letter-spacing:0.537px;">Conversations</div>
<div class="t" style="left:66.70px;top:411px;font-size:21.3px;line-height:28px;color:#1c3f94;letter-spacing:0.717px;">Contacts</div>
<div class="t" style="left:66.70px;top:464px;font-size:21.3px;line-height:28px;color:#4b4d52;letter-spacing:0.802px;">Opportunities</div>
<div class="t" style="left:66.70px;top:519px;font-size:21.3px;line-height:28px;color:#4b4d52;letter-spacing:0.416px;">Calendars</div>
<div class="t" style="left:66.70px;top:573px;font-size:21.3px;line-height:28px;color:#4b4d52;letter-spacing:0.814px;">Appointments</div>
<div class="t" style="left:66.70px;top:627px;font-size:21.3px;line-height:28px;color:#4b4d52;letter-spacing:0.340px;">Invoices</div>
<div class="t" style="left:66.70px;top:730px;font-size:21.3px;line-height:28px;color:#4b4d52;letter-spacing:0.212px;">Email Campaigns</div>
<div class="t" style="left:66.70px;top:784px;font-size:21.3px;line-height:28px;color:#4b4d52;letter-spacing:0.244px;">Social Planner</div>
<div class="t" style="left:66.70px;top:838px;font-size:21.3px;line-height:28px;color:#4b4d52;letter-spacing:0.071px;">Funnels</div>
<div class="t" style="left:66.70px;top:892px;font-size:21.3px;line-height:28px;color:#4b4d52;letter-spacing:0.497px;">Websites</div>
<div class="t" style="left:66.70px;top:946px;font-size:21.3px;line-height:28px;color:#4b4d52;letter-spacing:0.735px;">Workflows</div>
<div class="t" style="left:66.70px;top:999px;font-size:21.3px;line-height:28px;color:#4b4d52;letter-spacing:-0.058px;">Forms</div>
<div class="t" style="left:66.70px;top:1054px;font-size:21.3px;line-height:28px;color:#4b4d52;letter-spacing:0.049px;">Blogs</div>
<div class="t" style="left:66.70px;top:1108px;font-size:21.3px;line-height:28px;color:#4b4d52;letter-spacing:0.368px;">Courses</div>
<div class="t" style="left:78.40px;top:1162px;font-size:21.3px;line-height:28px;color:#4b4d52;letter-spacing:0.192px;">QR Code Generator</div>
<div class="t" style="left:72.80px;top:1302px;font-size:21.3px;line-height:28px;color:#545a66;letter-spacing:0.636px;">Settings</div>
<div class="b " style="left:0px;top:692px;width:335px;height:1.2px;background:#d9dcdf;"></div>
<svg class="b" style="left:27px;top:304px;overflow:visible;" width="24" height="26" viewBox="27 304 24 26"><rect x="27" y="304.6" width="10.4" height="8.8" rx="1.8" fill="#d9dbe1"/><rect x="40.3" y="304.6" width="10.5" height="12.7" rx="1.8" fill="#9aa0af"/><rect x="27" y="316" width="10.4" height="13.2" rx="1.8" fill="#9aa0af"/><rect x="40.3" y="320.6" width="10.5" height="8.6" rx="1.8" fill="#d9dbe1"/></svg>
<svg class="b" style="left:26px;top:358px;overflow:visible;" width="26" height="26" viewBox="26 358 26 26"><path d="M32 358.9 H46 A5.2 5.2 0 0 1 51.2 364.1 V378.1 A5.2 5.2 0 0 1 46 383.3 H26.8 V364.1 A5.2 5.2 0 0 1 32 358.9Z" fill="#d9dbe1"/><path d="M32 368.2 H46 M32 374.1 H42" stroke="#9aa0af" stroke-width="1.7"/></svg>
<svg class="b" style="left:27px;top:412px;overflow:visible;" width="24" height="27" viewBox="27 412 24 27"><circle cx="38.9" cy="419" r="6.2" fill="#94a9d9"/><path d="M27.7 438.1 A11.25 9.9 0 0 1 50.2 438.1Z" fill="#1e40a4"/></svg>
<svg class="b" style="left:27px;top:465px;overflow:visible;" width="24" height="27" viewBox="27 465 24 27"><g transform="translate(0,0)"><path d="M39.7 466.6 L47.4 466.6 Q50.5 467.2 49.3 470.6 L41.9 480.2 V487.6 Q41.6 491.2 37.4 491.3 Q35.05 491 35.05 489 V480.2 L33 478.2Z" fill="#d9dbe1"/><path d="M28.2 471.5 V468.8 Q28.2 467.5 29.6 467.3 L37.4 466 L31.4 477.1Z" fill="#9aa0af"/></g></svg>
<svg class="b" style="left:27px;top:838.6px;overflow:visible;" width="24" height="27.0" viewBox="27 838.6 24 27.0"><g transform="translate(0,373.6)"><path d="M39.7 466.6 L47.4 466.6 Q50.5 467.2 49.3 470.6 L41.9 480.2 V487.6 Q41.6 491.2 37.4 491.3 Q35.05 491 35.05 489 V480.2 L33 478.2Z" fill="#c6c9ce"/><path d="M28.2 471.5 V468.8 Q28.2 467.5 29.6 467.3 L37.4 466 L31.4 477.1Z" fill="#5f6b7a"/></g></svg>
<svg class="b" style="left:27px;top:519px;overflow:visible;" width="24" height="27" viewBox="27 519 24 27"><path d="M33.7 519.8 V524 M44.3 519.8 V524" stroke="#9aa0af" stroke-width="2"/><path d="M28 528.5 V527.5 A4.3 4.3 0 0 1 32.3 523.2 H45.9 A4.3 4.3 0 0 1 50.2 527.5 V528.5Z" fill="#9198a7"/><path d="M28 530.2 H50.2 V540 A5 5 0 0 1 45.2 545 H33 A5 5 0 0 1 28 540Z" fill="#d9dbe1"/><circle cx="34.6" cy="535.5" r="1.2" fill="#9aa0af"/><circle cx="38.9" cy="535.5" r="1.2" fill="#9aa0af"/><circle cx="34.6" cy="540" r="1.2" fill="#9aa0af"/></svg>
<svg class="b" style="left:27px;top:574px;overflow:visible;" width="25" height="24" viewBox="27 574 25 24"><path d="M36.1 579.6 H50.8 M36.1 587 H50.8 M36.1 594.5 H50.8" stroke="#414141" stroke-width="2.9"/><path d="M27.6 579.6 L29.8 581.8 L33.8 577.4 M27.6 587 L29.8 589.2 L33.8 584.8" fill="none" stroke="#414141" stroke-width="1.9"/><circle cx="30.1" cy="594.5" r="2.3" fill="#414141"/></svg>
<svg class="b" style="left:26px;top:630px;overflow:visible;" width="26" height="22" viewBox="26 630 26 22"><path d="M26.4 636.7 V634.7 A4.6 4.6 0 0 1 31 630.1 H46.9 A4.6 4.6 0 0 1 51.5 634.7 V636.7Z" fill="#9198a7"/><path d="M26.4 636.7 H51.5 V647.3 A4.6 4.6 0 0 1 46.9 651.9 H31 A4.6 4.6 0 0 1 26.4 647.3Z" fill="#d9dbe1"/><path d="M30.6 646.6 H35 M36.7 646.6 H42.9" stroke="#b3b8c2" stroke-width="1.5"/></svg>
<svg class="b" style="left:27px;top:732px;overflow:visible;" width="24" height="24" viewBox="27 732 24 24"><path d="M31.6 736 L46.4 742.7 Q48.2 743.9 46.4 745.1 L31.6 752.3 L33.8 743.9Z" fill="#c5c8cd" stroke="#c5c8cd" stroke-width="4" stroke-linejoin="round"/><path d="M35.8 743.9 H42.8" stroke="#878c96" stroke-width="1.8"/></svg>
<svg class="b" style="left:27px;top:786px;overflow:visible;" width="24" height="24" viewBox="27 786 24 24"><rect x="27" y="786.5" width="10" height="9.3" rx="2.4" fill="#5f6b7a"/><rect x="41" y="786.5" width="9.9" height="9.3" rx="2.4" fill="#c6c9ce"/><rect x="27" y="800.3" width="10" height="9.3" rx="2.4" fill="#c6c9ce"/><rect x="41" y="800.3" width="9.9" height="9.3" rx="2.4" fill="#5f6b7a"/></svg>
<svg class="b" style="left:25px;top:893px;overflow:visible;" width="28" height="26" viewBox="25 893 28 26"><rect x="27.3" y="895.8" width="23.1" height="15.9" rx="1.6" fill="none" stroke="#484848" stroke-width="2.6"/><path d="M36.6 912.5 H41.2 L42 916 H35.8Z" fill="#484848"/><path d="M32.2 916.9 H45.8" stroke="#484848" stroke-width="1.8" stroke-linecap="round"/></svg>
<svg class="b" style="left:26px;top:947px;overflow:visible;" width="26" height="26" viewBox="26 947 26 26"><circle cx="38.9" cy="960" r="12.3" fill="#d9dbe1"/><path d="M35.8 956.3 L42.6 960 L35.8 963.9Z" fill="#9aa0af" stroke="#9aa0af" stroke-width="2.6" stroke-linejoin="round"/></svg>
<svg class="b" style="left:29px;top:1001px;overflow:visible;" width="20" height="26" viewBox="29 1001 20 26"><path d="M31.6 1004 H41.6 L46.3 1008.8 V1024.2 H31.6Z" fill="none" stroke="#414141" stroke-width="2.4" stroke-linejoin="round"/><path d="M41.2 1004.4 V1009.2 H46" fill="none" stroke="#414141" stroke-width="1.8"/><path d="M35 1014.1 H43 M35 1018.2 H43" stroke="#414141" stroke-width="2"/></svg>
<svg class="b" style="left:28px;top:1057px;overflow:visible;" width="22" height="22" viewBox="28 1057 22 22"><path d="M28.8 1059 H49.5 M28.8 1065 H49.5 M28.8 1071.2 H49.5 M28.8 1077.1 H49.5" stroke="#414141" stroke-width="2.5"/></svg>
<svg class="b" style="left:28px;top:1109px;overflow:visible;" width="22" height="25" viewBox="28 1109 22 25"><path d="M32.6 1110 H49.1 V1131 H48.4 V1134.2 H32.6 A3.6 3.6 0 0 1 29 1130.6 V1113.6 A3.6 3.6 0 0 1 32.6 1110Z" fill="#414141"/><circle cx="38.9" cy="1119" r="6" fill="#fff"/><path d="M33 1119 H44.8 M38.9 1113 V1125 M36 1113.6 C34.8 1117 34.8 1121 36 1124.4 M41.8 1113.6 C43 1117 43 1121 41.8 1124.4" stroke="#414141" stroke-width="0.7" fill="none"/><rect x="31.4" y="1128.5" width="15.1" height="2.9" fill="#fff"/></svg>
<svg class="b" style="left:23px;top:1163px;overflow:visible;" width="26" height="26" viewBox="23 1163 26 26"><circle cx="35.9" cy="1176.1" r="10.2" fill="none" stroke="#555" stroke-width="3.6" stroke-dasharray="0.9 1.25"/><circle cx="35.9" cy="1176.1" r="9" fill="#484848"/><circle cx="35.9" cy="1176.1" r="7.5" fill="none" stroke="#8e8e8e" stroke-width="0.7"/></svg>
<svg class="b" style="left:27px;top:1300px;overflow:visible;" width="30" height="32" viewBox="27 1300 30 32"><path d="M42 1303.2 L53 1309.6 V1322.4 L42 1328.8 L31 1322.4 V1309.6Z" fill="#d9dbe1" stroke="#d9dbe1" stroke-width="4" stroke-linejoin="round"/><circle cx="42" cy="1315.9" r="4.9" fill="#9aa0af"/></svg>
<div class="b " style="left:294.6px;top:1284.5px;width:51.4px;height:51.5px;background:#fff;border:1px solid #eceef1;border-radius:9px;box-shadow:0 3px 10px rgba(0,0,0,0.08);"></div>
<svg class="b" style="left:312px;top:1298px;overflow:visible;" width="18" height="26" viewBox="312 1298 18 26"><path d="M326.5 1301.2 L315.9 1311 L326.5 1320.6" fill="none" stroke="#111" stroke-width="3" stroke-linecap="round" stroke-linejoin="round"/></svg>
<svg class="b" style="left:100px;top:18px;overflow:visible;" width="140" height="70" viewBox="100 18 140 70"><path d="M124.29 31.23 L129.27 31.73 L129.28 35.49 L132.70 37.33 L135.85 35.26 L139.02 39.13 L136.37 41.81 L137.49 45.52 L141.17 46.29 L140.67 51.27 L136.91 51.28 L135.07 54.70 L137.14 57.85 L133.27 61.02 L130.59 58.37 L126.88 59.49 L126.11 63.17 L121.13 62.67 L121.12 58.91 L117.70 57.07 L114.55 59.14 L111.38 55.27 L114.03 52.59 L112.91 48.88 L109.23 48.11 L109.73 43.13 L113.49 43.12 L115.33 39.70 L113.26 36.55 L117.13 33.38 L119.81 36.03 L123.52 34.91Z" fill="#d8d8d8" stroke="#d8d8d8" stroke-width="1.2" stroke-linejoin="round"/><circle cx="125.2" cy="47.2" r="6.4" fill="#e9e9e9"/><circle cx="125.2" cy="47.2" r="4.4" fill="#fff"/><path d="M140.64 56.45 L144.37 57.41 L143.84 60.48 L146.17 62.22 L148.97 60.85 L150.93 64.16 L148.39 65.95 L148.80 68.83 L151.75 69.84 L150.79 73.57 L147.72 73.04 L145.98 75.37 L147.35 78.17 L144.04 80.13 L142.25 77.59 L139.37 78.00 L138.36 80.95 L134.63 79.99 L135.16 76.92 L132.83 75.18 L130.03 76.55 L128.07 73.24 L130.61 71.45 L130.20 68.57 L127.25 67.56 L128.21 63.83 L131.28 64.36 L133.02 62.03 L131.65 59.23 L134.96 57.27 L136.75 59.81 L139.63 59.40Z" fill="#d8d8d8" stroke="#d8d8d8" stroke-width="1" stroke-linejoin="round"/><circle cx="139.5" cy="68.7" r="4.8" fill="#e9e9e9"/><circle cx="139.5" cy="68.7" r="3.3" fill="#fff"/><g transform="translate(100,18) scale(0.05724)" fill="none" stroke="#2fa3ee" stroke-linecap="round" stroke-linejoin="round"><path d="M880 352 C850 318 795 385 768 480 C745 570 765 622 830 592 C880 568 925 535 960 495" stroke-width="50"/><path d="M1055 372 C1000 415 960 520 980 588 C1000 630 1062 588 1100 500 C1130 430 1128 362 1090 352 C1058 348 1040 392 1062 428 C1092 458 1150 438 1200 398" stroke-width="46"/><path d="M1335 392 C1290 338 1218 400 1190 500 C1170 580 1192 622 1242 590 C1292 552 1330 462 1352 380 C1330 462 1300 560 1332 600 C1362 620 1400 572 1432 520" stroke-width="48"/><path d="M1552 362 C1530 328 1470 390 1442 490 C1420 572 1442 622 1502 590 C1552 565 1590 530 1620 492" stroke-width="48"/><path d="M1762 152 C1722 300 1672 500 1642 660" stroke-width="64"/><path d="M1682 520 C1722 420 1772 368 1802 400 C1832 440 1790 560 1842 590 C1870 600 1886 572 1886 540" stroke-width="44"/></g></svg>
<div class="t" style="left:152.50px;top:52px;font-size:16.3px;line-height:23px;color:#fcb550;font-weight:700;letter-spacing:2.433px;-webkit-text-stroke:1.2px #fcb550;">WORKS</div>
<div class="b " style="left:2778.2px;top:1264.9px;width:71.8px;height:71.8px;background:#3db4fe;border-radius:50%;box-shadow:0 4px 18px rgba(0,0,0,0.10);"></div>
<svg class="b" style="left:2796px;top:1281px;overflow:visible;" width="36" height="41" viewBox="2796 1281 36 41"><path d="M2802.8 1283.6 H2825.7 A3.8 3.8 0 0 1 2829.5 1287.4 V1319.4 L2819.6 1314 H2802.8 A3.8 3.8 0 0 1 2799 1310.2 V1287.4 A3.8 3.8 0 0 1 2802.8 1283.6Z" fill="#fff"/></svg>
<div class="b " style="left:359.9px;top:468.2px;width:145.4px;height:145.4px;background:rgba(0,0,0,0.39);border-radius:50%;"></div>
<div class="b " style="left:397.7px;top:505.7px;width:69.6px;height:69.6px;background:#000;border-radius:50%;"></div>
</body></html>
